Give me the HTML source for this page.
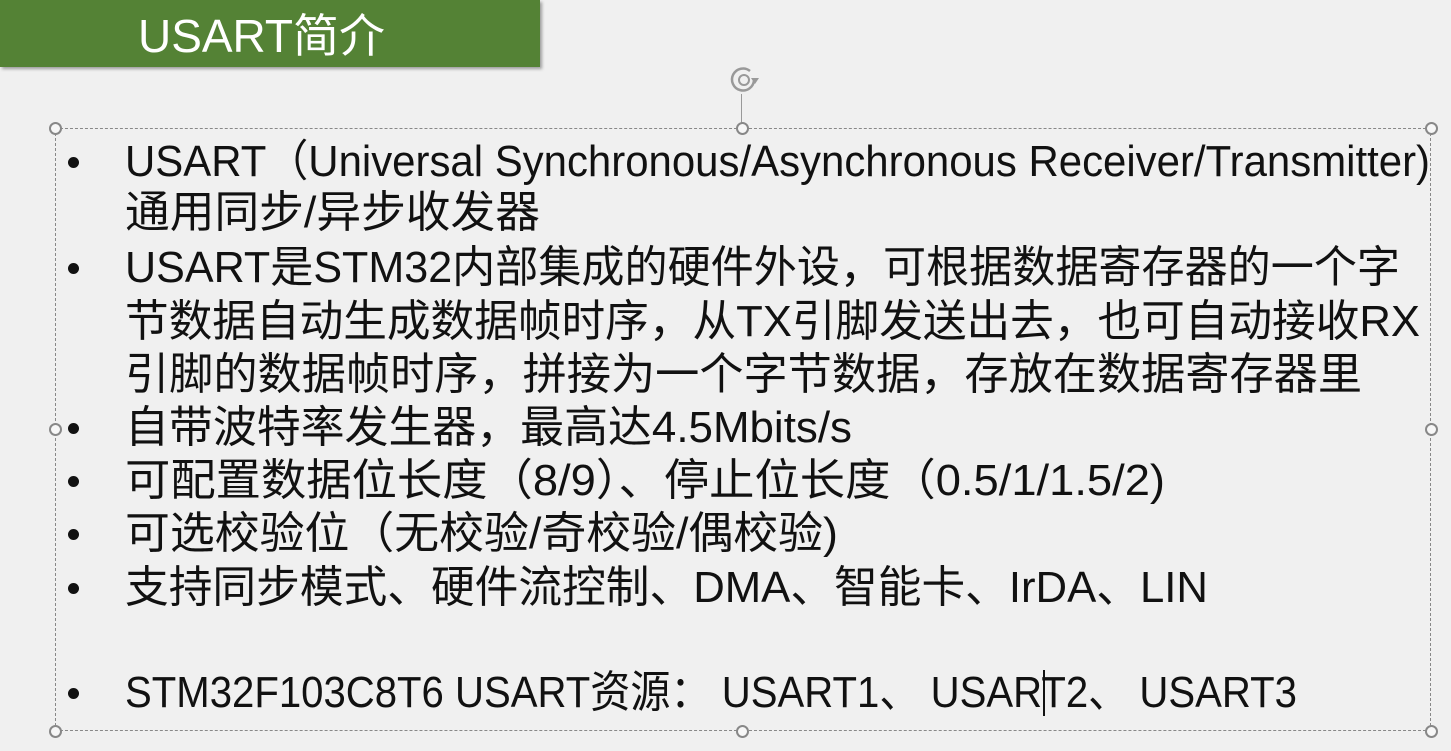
<!DOCTYPE html>
<html><head><meta charset="utf-8"><style>
html,body{margin:0;padding:0}
body{width:1451px;height:751px;background:#f0f0f0;position:relative;overflow:hidden;font-family:"Liberation Sans","Noto Sans CJK SC",sans-serif;color:#111}
.bar{position:absolute;left:0;top:0;width:540px;height:67px;background:#548235;box-shadow:2px 2px 3px rgba(0,0,0,.35)}
.title{position:absolute;left:138px;top:10px;font-size:46px;color:#fff;line-height:52px;white-space:nowrap;transform-origin:0 0}
.box{position:absolute;left:55px;top:128px;width:1376px;height:603px;border:1px dashed #888;box-sizing:border-box}
.h{position:absolute;width:13px;height:13px;border:2px solid #888;border-radius:50%;background:#f7f7f7;box-sizing:border-box}
.ln{position:absolute;left:125px;font-size:44px;line-height:52px;white-space:nowrap;transform-origin:0 50%}
.b{position:absolute;left:68px;width:11px;height:11px;border-radius:50%;background:#111}
</style></head><body>
<div class="bar"></div>
<div class="title" data-w="247">USART简介</div>
<div class="box"></div>
<div style="position:absolute;left:741px;top:94px;width:1px;height:34px;background:#999"></div>
<svg style="position:absolute;left:728px;top:64px" width="34" height="32" viewBox="0 0 34 32"><path d="M26 16 A11 11 0 1 1 22 7" fill="none" stroke="#999" stroke-width="2.5"/><circle cx="16" cy="16" r="5" fill="none" stroke="#999" stroke-width="2"/><path d="M23 14 l8 0 l-4 6z" fill="#999"/></svg>
<div class="h" style="left:49px;top:122px"></div><div class="h" style="left:736px;top:122px"></div><div class="h" style="left:1425px;top:122px"></div>
<div class="h" style="left:49px;top:423px"></div><div class="h" style="left:1425px;top:423px"></div>
<div class="h" style="left:49px;top:725px"></div><div class="h" style="left:736px;top:725px"></div><div class="h" style="left:1425px;top:725px"></div>

<div class="b" style="top:157px"></div>
<div class="ln" data-w="1305" style="top:136px">USART（Universal Synchronous/Asynchronous Receiver/Transmitter)</div>
<div class="ln" data-w="415" style="top:187px">通用同步/异步收发器</div>
<div class="b" style="top:263px"></div>
<div class="ln" data-w="1275" style="top:242px">USART是STM32内部集成的硬件外设，可根据数据寄存器的一个字</div>
<div class="ln" data-w="1295" style="top:296px">节数据自动生成数据帧时序，从TX引脚发送出去，也可自动接收RX</div>
<div class="ln" data-w="1237" style="top:349px">引脚的数据帧时序，拼接为一个字节数据，存放在数据寄存器里</div>
<div class="b" style="top:423px"></div>
<div class="ln" data-w="727" style="top:402px">自带波特率发生器，最高达4.5Mbits/s</div>
<div class="b" style="top:476px"></div>
<div class="ln" data-w="1040" style="top:455px">可配置数据位长度（8/9）、停止位长度（0.5/1/1.5/2)</div>
<div class="b" style="top:529px"></div>
<div class="ln" data-w="713" style="top:508px">可选校验位（无校验/奇校验/偶校验)</div>
<div class="b" style="top:583px"></div>
<div class="ln" data-w="1083" style="top:562px">支持同步模式、硬件流控制、DMA、智能卡、IrDA、LIN</div>
<div class="b" style="top:688px"></div>
<div class="ln" data-w="1172" style="top:667px">STM32F103C8T6 USART资源： USART1、 USART2、 USART3</div>
<div style="position:absolute;left:1043px;top:670px;width:2px;height:46px;background:#111"></div>
<script>
document.querySelectorAll('[data-w]').forEach(function(e){var w=e.getBoundingClientRect().width;e.style.transform='scaleX('+(+e.dataset.w/w)+')';});
</script>
</body></html>
